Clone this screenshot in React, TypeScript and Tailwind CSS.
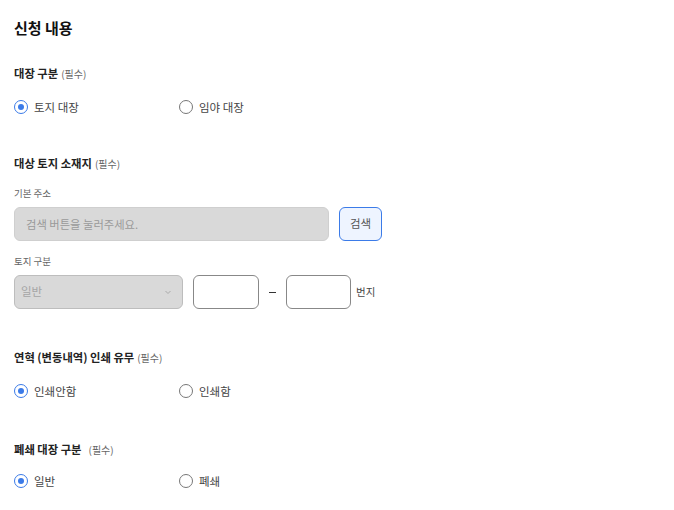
import React, { useState } from 'react';

const font = { fontFamily: '"Noto Sans CJK KR", "Noto Sans", sans-serif' };

function Radio({ checked, label, onClick }: { checked: boolean; label: string; onClick: () => void }) {
  return (
    <button type="button" onClick={onClick} className="flex items-center gap-[6px] h-4">
      <span
        className={
          checked
            ? 'w-[14px] h-[14px] rounded-full border-[1.5px] border-[#3b7be8] flex items-center justify-center'
            : 'w-[14px] h-[14px] rounded-full border-[1.5px] border-[#777] flex items-center justify-center'
        }
      >
        {checked && <span className="w-[6px] h-[6px] rounded-full bg-[#3b7be8]" />}
      </span>
      <span className="text-[11.5px] leading-4 text-[#444]">{label}</span>
    </button>
  );
}

function RadioRow({ options, mt }: { options: string[]; mt: string }) {
  const [value, setValue] = useState(options[0]);
  return (
    <div className={`flex ${mt}`}>
      {options.map((o) => (
        <div key={o} className="w-[165px]">
          <Radio checked={value === o} label={o} onClick={() => setValue(o)} />
        </div>
      ))}
    </div>
  );
}

function Label({ text, gap, mt }: { text: string; gap?: boolean; mt: string }) {
  return (
    <div className={`h-4 flex items-center ${mt}`}>
      <span className="text-[11.3px] font-bold text-[#222]">{text}</span>
      <span className={gap ? 'text-[10px] text-[#666] ml-[7px]' : 'text-[10px] text-[#666] ml-[3px]'}>(필수)</span>
    </div>
  );
}

export default function App() {
  return (
    <div className="w-[674px] h-[510px] bg-white px-[14px] flex flex-col overflow-hidden" style={font}>
      <h1 className="mt-[18px] h-5 leading-5 text-[15px] font-bold text-[#111]">신청 내용</h1>

      <Label text="대장 구분" mt="mt-[27px]" />
      <RadioRow options={['토지 대장', '임야 대장']} mt="mt-[18px]" />

      <Label text="대상 토지 소재지" mt="mt-[40px]" />
      <div className="mt-[15px] h-[14px] leading-[14px] text-[9.5px] text-[#666]">기본 주소</div>
      <div className="mt-[7px] flex gap-[10px]">
        <div className="w-[315px] h-[34px] rounded-[6px] bg-[#d9d9d9] border border-[#cfcfcf] flex items-center px-[11px] text-[11.3px] text-[#999]">
          검색 버튼을 눌러주세요.
        </div>
        <button
          type="button"
          className="w-[43px] h-[34px] rounded-[6px] border border-[#3b7be8] bg-[#eef4ff] text-[11.5px] text-[#555]"
        >
          검색
        </button>
      </div>

      <div className="mt-[13px] h-[14px] leading-[14px] text-[9.5px] text-[#666]">토지 구분</div>
      <div className="mt-[7px] flex items-center">
        <div className="w-[169px] h-[34px] rounded-[6px] bg-[#d9d9d9] border border-[#bdbdbd] flex items-center justify-between pl-[6px] pr-[9px]">
          <span className="text-[11.5px] text-[#a5a5a5]">일반</span>
          <svg className="w-[10px] h-[10px]" viewBox="0 0 10 10" fill="none" stroke="#aaa" strokeWidth="1">
            <path d="M2.5 4l2.5 2.5L7.5 4" />
          </svg>
        </div>
        <div className="ml-[10px] w-[66px] h-[34px] rounded-[6px] bg-white border border-[#888]" />
        <div className="w-[27px] flex justify-center">
          <span className="block w-[7px] h-[1px] bg-[#333]" />
        </div>
        <div className="w-[65px] h-[34px] rounded-[6px] bg-white border border-[#888]" />
        <span className="ml-[5px] text-[10.5px] text-[#444]">번지</span>
      </div>

      <Label text="연혁 (변동내역) 인쇄 유무" mt="mt-[40px]" />
      <RadioRow options={['인쇄안함', '인쇄함']} mt="mt-[18px]" />

      <Label text="폐쇄 대장 구분" gap mt="mt-[42px]" />
      <RadioRow options={['일반', '폐쇄']} mt="mt-[16px]" />
    </div>
  );
}
